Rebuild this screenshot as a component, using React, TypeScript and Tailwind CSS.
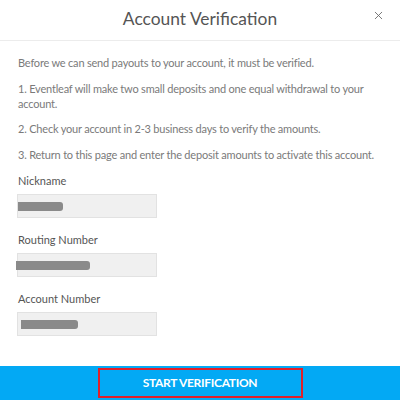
import { X } from "lucide-react";

const fields = [
  { label: "Nickname", redact: "w-[45px]" },
  { label: "Routing Number", redact: "w-[74px] ml-[-2px]" },
  { label: "Account Number", redact: "w-[57px] ml-[3px]" },
];

export default function App() {
  return (
    <div className="w-[400px] h-[400px] bg-white flex flex-col font-['Lato',sans-serif] overflow-hidden">
      {/* Header */}
      <div className="relative h-[41px] flex items-center justify-center border-b border-[#ececec]">
        <h2 className="text-[17.4px] text-[#555] leading-none mt-[-3px]">Account Verification</h2>
        <X size={13} strokeWidth={1.6} className="absolute right-[15px] top-[9px] text-[#666]" />
      </div>

      {/* Body */}
      <div className="flex-1 pl-[18px] pr-[20px] pt-[14px] text-[11px] tracking-[-0.2px] text-[#7a7a7a] leading-[15px]">
        <p>Before we can send payouts to your account, it must be verified.</p>
        <p className="mt-[11px]">1. Eventleaf will make two small deposits and one equal withdrawal to your account.</p>
        <p className="mt-[10px]">2. Check your account in 2-3 business days to verify the amounts.</p>
        <p className="mt-[11px]">3. Return to this page and enter the deposit amounts to activate this account.</p>

        <div className="flex flex-col gap-[15px] mt-[12px] tracking-normal">
          {fields.map((f) => (
            <div key={f.label}>
              <div className="text-[11px] text-[#555] leading-[14px]">{f.label}</div>
              <div className="mt-[6px] w-[140px] h-[24px] bg-[#f0f0f0] border border-[#e2e2e2] flex items-center ml-[-1px]">
                <div className={`${f.redact} h-[9px] bg-[#8a8a8a] rounded-r-[3px]`} />
              </div>
            </div>
          ))}
        </div>
      </div>

      {/* Footer */}
      <div className="h-[34px] bg-[#03a9f4] flex items-center justify-center">
        <button className="w-[205px] h-[30px] border-2 border-[#e0202a] text-white font-bold text-[12px] tracking-tight">
          START VERIFICATION
        </button>
      </div>
    </div>
  );
}
